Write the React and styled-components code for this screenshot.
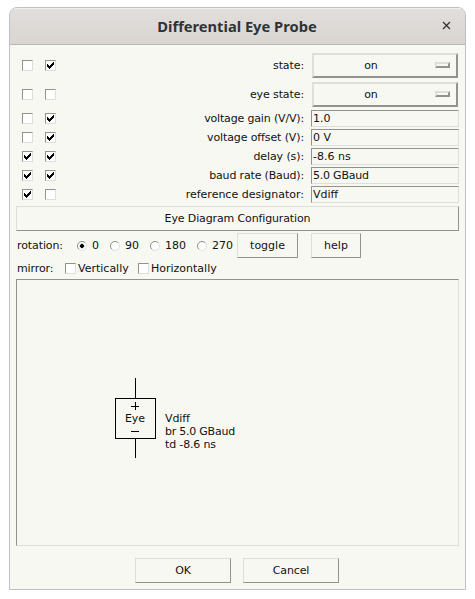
import React from "react";
import styled, { createGlobalStyle } from "styled-components";

const LIGHT = "#dedfda";
const DARK = "#92938f";

const GlobalStyle = createGlobalStyle`
  * { box-sizing: border-box; }
  body {
    margin: 0;
    background: #fff;
    font-family: "DejaVu Sans", sans-serif;
    font-size: 11px;
    line-height: 13px;
    color: #111;
  }
`;

const Dialog = styled.main`
  width: 457px;
  height: 583px;
  margin: 7px 0 0 9px;
  display: flex;
  flex-direction: column;
  background: #f7f8f2;
  border: 1px solid #c0c0c3;
  border-radius: 8px 8px 0 0;
  overflow: hidden;
`;

const TitleBar = styled.header`
  height: 37px;
  flex: none;
  display: grid;
  grid-template-columns: 36px 1fr 36px;
  align-items: center;
  justify-items: center;
  background: linear-gradient(#e1dedb, #d9d5d1);
  border-bottom: 1px solid #b9b5b0;
  box-shadow: inset 0 1px #f2f0ee;
`;

const Title = styled.h1`
  grid-column: 2;
  margin: 0;
  padding: 0 1px 1px 0;
  font: bold 14.7px/20px "Noto Sans", sans-serif;
  color: #2e3436;
  white-space: nowrap;
`;

const CloseIcon = styled.svg`
  width: 9px;
  height: 9px;
  display: block;
  margin: 0 1px 1px 0;
`;

const Row = styled.div`
  display: grid;
  grid-template-columns: 23px 23px 236px 148px;
  align-items: center;
  height: ${(p) => (p.$tall ? 29 : 19)}px;
  margin-left: 12px;
`;

const Properties = styled.section`
  padding: 6px 0 2px;
`;

const RowLabel = styled.span`
  text-align: right;
  white-space: nowrap;
  letter-spacing: ${(p) => p.$tracking || 0}px;
`;

const Entry = styled.div`
  height: 17px;
  margin-left: 7px;
  width: 148px;
  padding: 1px 1px 0;
  border: 1px solid;
  border-color: ${DARK} ${LIGHT} ${LIGHT} ${DARK};
  letter-spacing: ${(p) => p.$tracking || 0}px;
`;

const OptionMenu = styled.div`
  height: 25px;
  width: 146px;
  margin-left: 8px;
  display: grid;
  grid-template-columns: 114px 15px;
  align-items: center;
  text-align: center;
  border: 2px solid;
  border-color: ${LIGHT} ${DARK} ${DARK} ${LIGHT};
`;

const Indicator = styled.span`
  width: 15px;
  height: 6px;
  margin: 0 0 1px 7px;
  border: 2px solid;
  border-color: ${LIGHT} ${DARK} ${DARK} ${LIGHT};
`;

const Box = styled.span`
  width: 11px;
  height: 11px;
  flex: none;
  display: block;
  background: #fff;
  border: 1px solid;
  border-color: ${DARK} ${LIGHT} ${LIGHT} ${DARK};
  svg { display: block; }
`;

const Button = styled.button`
  height: 25px;
  width: ${(p) => p.$width}px;
  margin: 0 0 0 ${(p) => p.$gap || 0}px;
  padding: 0;
  flex: none;
  font: inherit;
  color: inherit;
  letter-spacing: ${(p) => p.$tracking || 0}px;
  background: transparent;
  border: 1px solid;
  border-color: ${LIGHT} ${DARK} ${DARK} ${LIGHT};
`;

const Rotation = styled.div`
  display: flex;
  align-items: center;
  height: 25px;
  margin: 2px 0 0 7px;
`;

const Mirror = styled.div`
  display: flex;
  align-items: center;
  height: 21px;
  margin-left: 7px;
`;

const GroupLabel = styled.span`
  width: ${(p) => p.$width}px;
  flex: none;
  letter-spacing: -0.1px;
`;

const Choice = styled.label`
  display: flex;
  align-items: center;
  gap: ${(p) => p.$gap}px;
  width: ${(p) => p.$width}px;
  flex: none;
  white-space: nowrap;
`;

const RadioIcon = styled.svg`
  width: 10px;
  height: 10px;
  flex: none;
`;

const Preview = styled.section`
  width: 443px;
  height: 267px;
  margin: 0 0 12px 6px;
  flex: none;
  border: 1px solid;
  border-color: ${DARK} ${LIGHT} ${LIGHT} ${DARK};
`;

const Schematic = styled.svg`
  display: block;
  width: 441px;
  height: 265px;
  font-size: 11px;
  fill: #111;
`;

const Annotation = styled.text`
  letter-spacing: ${(p) => p.$tracking || 0}px;
`;

const Footer = styled.footer`
  display: flex;
  gap: 12px;
  padding-left: 125px;
`;

function CheckBox({ checked }) {
  return (
    <Box>
      {checked && (
        <svg width="9" height="9" viewBox="0 0 9 9" shapeRendering="crispEdges">
          <path
            fill="#000"
            d="M7 1h1v3h-1v1h-1v1h-1v1h-1v1h-1v-1h-1v-1h-1v-3h1v1h1v1h1v-1h1v-1h1v-1h1z"
          />
        </svg>
      )}
    </Box>
  );
}

function Radio({ selected }) {
  return (
    <RadioIcon viewBox="0 0 10 10">
      <circle cx="5" cy="5" r="4.5" fill="#fff" stroke={LIGHT} />
      <path d="M1.8 8.2A4.5 4.5 0 0 1 8.2 1.8" fill="none" stroke={DARK} />
      {selected && (
        <path d="M4 3h2v1h1v2h-1v1h-2v-1h-1v-2h1z" fill="#000" stroke="#000" strokeWidth="0.3" />
      )}
    </RadioIcon>
  );
}

const menus = [
  { label: "state:", value: "on", checks: [false, true], tracking: -0.1 },
  { label: "eye state:", value: "on", checks: [false, false], tracking: -0.1 },
];

const entries = [
  { label: "voltage gain (V/V):", value: "1.0", checks: [false, true], tracking: -0.16 },
  { label: "voltage offset (V):", value: "0 V", checks: [false, true], tracking: -0.12 },
  { label: "delay (s):", value: "-8.6 ns", checks: [true, true], tracking: -0.1 },
  { label: "baud rate (Baud):", value: "5.0 GBaud", checks: [true, true], tracking: -0.16, valueTracking: -0.22 },
  { label: "reference designator:", value: "Vdiff", checks: [true, false] },
];

const rotations = [
  { label: "0", width: 33 },
  { label: "90", width: 40 },
  { label: "180", width: 47 },
  { label: "270", width: 40 },
];

export default function App() {
  return (
    <>
      <GlobalStyle />
      <Dialog>
        <TitleBar>
          <Title>Differential Eye Probe</Title>
          <CloseIcon viewBox="0 0 9 9">
            <path d="M1 1l7 7M8 1L1 8" stroke="#2e3436" strokeWidth="1.3" />
          </CloseIcon>
        </TitleBar>
        <Properties>
          {menus.map((m) => (
            <Row key={m.label} $tall>
              <CheckBox checked={m.checks[0]} />
              <CheckBox checked={m.checks[1]} />
              <RowLabel $tracking={m.tracking}>{m.label}</RowLabel>
              <OptionMenu>
                <span>{m.value}</span>
                <Indicator />
              </OptionMenu>
            </Row>
          ))}
          {entries.map((e) => (
            <Row key={e.label}>
              <CheckBox checked={e.checks[0]} />
              <CheckBox checked={e.checks[1]} />
              <RowLabel $tracking={e.tracking}>{e.label}</RowLabel>
              <Entry $tracking={e.valueTracking}>{e.value}</Entry>
            </Row>
          ))}
        </Properties>
        <Button $width={443} $gap={6} $tracking={-0.13}>Eye Diagram Configuration</Button>
        <Rotation>
          <GroupLabel $width={60}>rotation:</GroupLabel>
          {rotations.map((r, i) => (
            <Choice key={r.label} $width={r.width} $gap={5}>
              <Radio selected={i === 0} />
              {r.label}
            </Choice>
          ))}
          <Button $width={61}>toggle</Button>
          <Button $width={50} $gap={13}>help</Button>
        </Rotation>
        <Mirror>
          <GroupLabel $width={48}>mirror:</GroupLabel>
          <Choice $width={73} $gap={2}><CheckBox />Vertically</Choice>
          <Choice $width={80} $gap={2}><CheckBox />Horizontally</Choice>
        </Mirror>
        <Preview>
          <Schematic viewBox="17 280 441 265">
            <path
              d="M135.5 378v20M135.5 438v20M115.5 398.5h40v40h-40zM131 406.5h8M135.5 402v8M131 431.5h8"
              fill="none"
              stroke="#000"
              shapeRendering="crispEdges"
            />
            <Annotation x="125" y="422" $tracking={-0.15}>Eye</Annotation>
            <Annotation x="165" y="422" $tracking={-0.1}>Vdiff</Annotation>
            <Annotation x="165" y="435" $tracking={-0.24}>br 5.0 GBaud</Annotation>
            <Annotation x="165" y="448" $tracking={-0.15}>td -8.6 ns</Annotation>
          </Schematic>
        </Preview>
        <Footer>
          <Button $width={96} $tracking={-0.2}>OK</Button>
          <Button $width={96} $tracking={-0.1}>Cancel</Button>
        </Footer>
      </Dialog>
    </>
  );
}
